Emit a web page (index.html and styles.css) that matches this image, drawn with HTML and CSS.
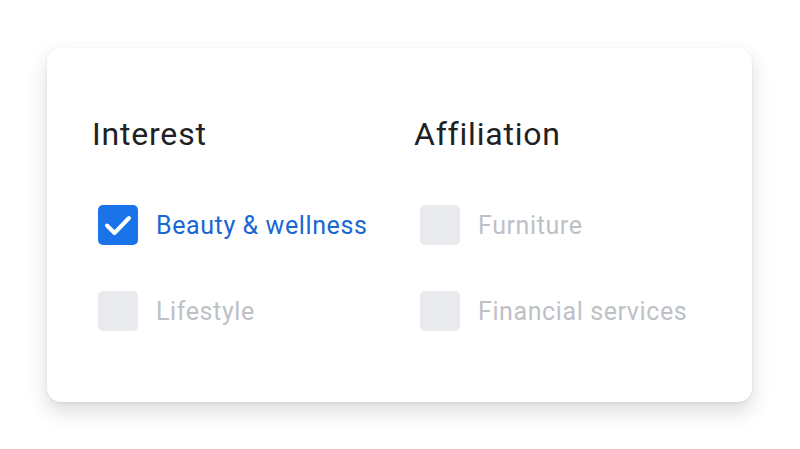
FILE: index.html
```html
<!DOCTYPE html>
<html lang="en">
<head>
    <meta charset="UTF-8">
    <meta name="viewport" content="width=device-width, initial-scale=1.0">
    <title>Audience</title>
    <link rel="stylesheet" href="styles.css">
</head>
<body>
    <div class="card">
        <div class="column">
            <h2>Interest</h2>
            <div class="option checked">
                <span class="box">
                    <svg viewBox="0 0 40 40" width="40" height="40"><path d="M9 20.5l7.5 7.5L31 13" fill="none" stroke="#fff" stroke-width="4" stroke-linecap="round" stroke-linejoin="round"/></svg>
                </span>
                <span class="label">Beauty &amp; wellness</span>
            </div>
            <div class="option">
                <span class="box"></span>
                <span class="label">Lifestyle</span>
            </div>
        </div>
        <div class="column">
            <h2>Affiliation</h2>
            <div class="option">
                <span class="box"></span>
                <span class="label">Furniture</span>
            </div>
            <div class="option">
                <span class="box"></span>
                <span class="label">Financial services</span>
            </div>
        </div>
    </div>
</body>
</html>
```

FILE: styles.css
```css
body {
    margin: 0;
    padding: 48px 0 47px 47px;
    background-color: #ffffff;
    font-family: Roboto, "Liberation Sans", sans-serif;
}
.card {
    box-sizing: border-box;
    width: 705px;
    height: 354px;
    padding: 70px 0 0 45px;
    display: flex;
    background: #fff;
    border-radius: 14px;
    box-shadow: 0 1px 3px rgba(60, 64, 67, 0.10), 0 10px 20px rgba(60, 64, 67, 0.18);
}
.column {
    width: 322px;
}
h2 {
    margin: 0 0 55px;
    font-size: 32px;
    font-weight: 400;
    line-height: 32px;
    letter-spacing: 0.8px;
    color: #202124;
}
.option {
    display: flex;
    align-items: center;
    gap: 18px;
    margin-left: 6px;
    height: 40px;
}
.option + .option {
    margin-top: 46px;
}
.box {
    width: 40px;
    height: 40px;
    border-radius: 5px;
    background: #e8eaed;
    display: flex;
}
.checked .box {
    background: #1a73e8;
}
.label {
    font-size: 25px;
    letter-spacing: 0.6px;
    color: #bdc1c6;
}
.checked .label {
    color: #1967d2;
}
```
